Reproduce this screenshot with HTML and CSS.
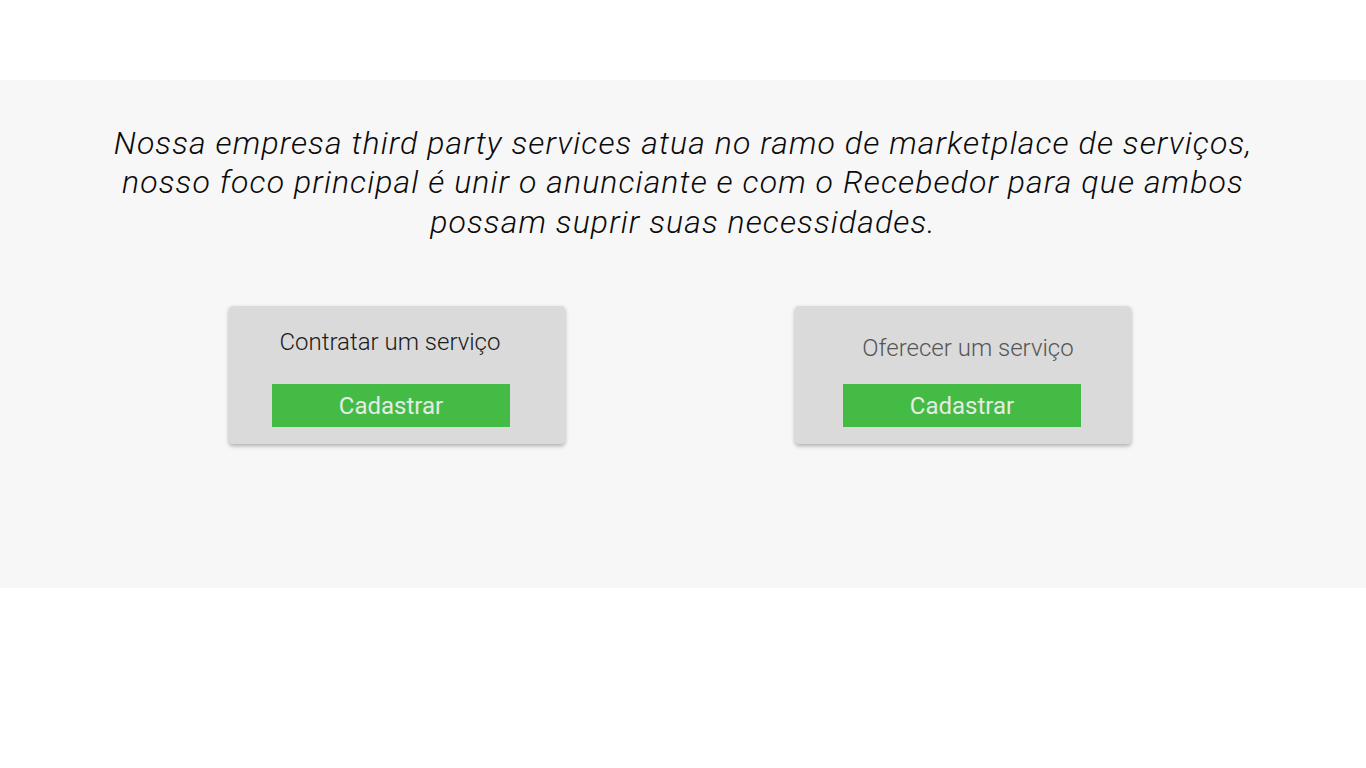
FILE: index.html
```html
<!DOCTYPE html>
<html lang="pt">
<head>
<meta charset="utf-8">
<title>Third Party Services</title>
<link rel="stylesheet" href="styles.css">
</head>
<body>
<header class="top"></header>
<section class="band">
  <p class="intro">Nossa empresa third party services atua no ramo de marketplace de serviços,<br>nosso foco principal é unir o anunciante e com o Recebedor para que ambos<br>possam suprir suas necessidades.</p>
  <div class="cards">
    <div class="card card-a">
      <h3 class="card-title">Contratar um serviço</h3>
      <button class="btn">Cadastrar</button>
    </div>
    <div class="card card-b">
      <h3 class="card-title">Oferecer um serviço</h3>
      <button class="btn">Cadastrar</button>
    </div>
  </div>
</section>
</body>
</html>
```
FILE: styles.css
```css
html, body {
  margin: 0;
  padding: 0;
  background: #ffffff;
  font-family: Roboto, "Liberation Sans", sans-serif;
}
.top {
  height: 80px;
}
.band {
  background: #f7f7f7;
  height: 508px;
  box-sizing: border-box;
  padding-top: 43.5px;
}
.intro {
  margin: 0;
  text-align: center;
  font-style: italic;
  font-weight: 300;
  font-size: 32px;
  line-height: 39.5px;
  letter-spacing: 1.1px;
  color: #0a0a0a;
}
.cards {
  display: flex;
  justify-content: center;
  gap: 230px;
  margin-top: 64px;
  padding-right: 6px;
}
.card {
  width: 336px;
  height: 138px;
  background: #dadada;
  border-radius: 4px;
  box-shadow: 0 2px 4px rgba(0, 0, 0, 0.3);
  box-sizing: border-box;
  display: flex;
  flex-direction: column;
  align-items: center;
}
.card-title {
  margin: 0;
  font-weight: 300;
  font-size: 24px;
  line-height: 28px;
}
.card-a .card-title {
  color: #1a1a1a;
  margin-top: 22px;
  margin-left: -14px;
  margin-bottom: 28px;
}
.card-b .card-title {
  color: #555;
  margin-top: 28px;
  margin-left: 10px;
  margin-bottom: 22px;
}
.btn {
  width: 238px;
  height: 43px;
  border: none;
  background: #44bb44;
  color: #e3ece3;
  font-family: Roboto, "Liberation Sans", sans-serif;
  font-weight: 400;
  font-size: 24px;
  padding: 0;
  cursor: pointer;
}
.card-a .btn {
  margin-left: -12px;
}
.card-b .btn {
  margin-left: -2px;
}
```
